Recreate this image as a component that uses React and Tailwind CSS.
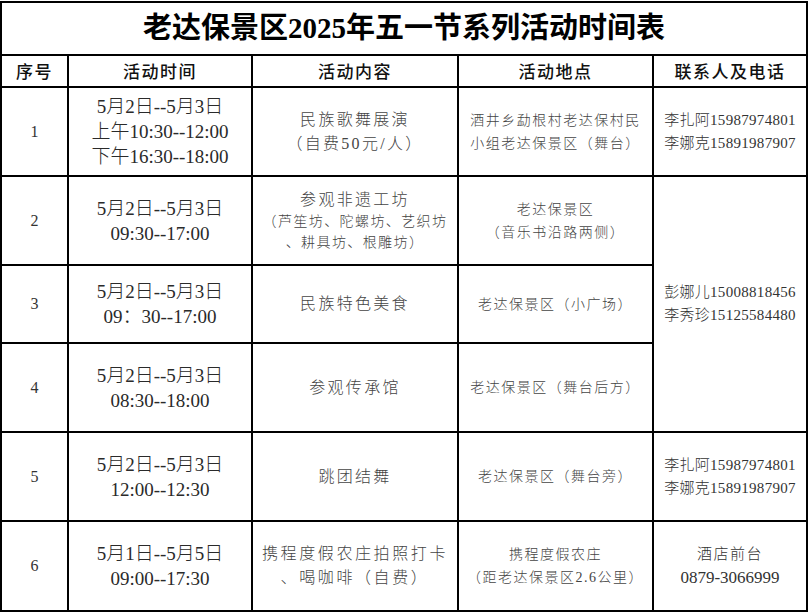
import React from "react";

const serif = "font-['Liberation_Serif','Noto_Sans_CJK_SC',serif]";

function Cell({ children, className = "" }) {
  return (
    <div
      className={`bg-white flex flex-col items-center justify-center text-center whitespace-nowrap ${className}`}
    >
      {children}
    </div>
  );
}

function Num({ n }) {
  return <Cell className={`${serif} text-[16px] text-[#333]`}>{n}</Cell>;
}

function Time({ lines }) {
  return (
    <Cell className={`${serif} text-[19px] leading-[25px] text-[#2a2a2a] font-light`}>
      {lines.map((l, i) => (
        <div key={i}>{l}</div>
      ))}
    </Cell>
  );
}

function Content({ children }) {
  return (
    <Cell className={`${serif} text-[16px] leading-[24px] tracking-[2.3px] text-[#444] font-light`}>
      {children}
    </Cell>
  );
}

function Place({ lines }) {
  return (
    <Cell className={`${serif} text-[14px] leading-[23px] tracking-[1.5px] text-[#444] font-light`}>
      {lines.map((l, i) => (
        <div key={i}>{l}</div>
      ))}
    </Cell>
  );
}

function Contact({ lines, className = "" }) {
  return (
    <Cell className={`${serif} text-[15px] leading-[23px] tracking-[0.3px] text-[#333] font-light ${className}`}>
      {lines.map((l, i) => (
        <div key={i}>{l}</div>
      ))}
    </Cell>
  );
}

export default function App() {
  const head = "font-['Noto_Sans_CJK_SC',sans-serif] text-[17px] tracking-[1.5px] font-medium text-[#111]";
  return (
    <div className="w-[809px] h-[613px] bg-white">
      <div className="mt-px w-[808px] grid grid-cols-[65px_182px_204px_193px_152px] grid-rows-[51px_30px_87px_87px_76px_87px_87px_88px] gap-[2px] p-[2px] bg-black">
        <Cell className={`col-span-5 ${serif} text-[29px] font-bold text-black`}>
          老达保景区2025年五一节系列活动时间表
        </Cell>

        <Cell className={head}>序号</Cell>
        <Cell className={head}>活动时间</Cell>
        <Cell className={head}>活动内容</Cell>
        <Cell className={head}>活动地点</Cell>
        <Cell className={head}>联系人及电话</Cell>

        {/* Row 1 */}
        <Num n="1" />
        <Time lines={["5月2日--5月3日", "上午10:30--12:00", "下午16:30--18:00"]} />
        <Content>
          <div>民族歌舞展演</div>
          <div>（自费50元/人）</div>
        </Content>
        <Place lines={["酒井乡勐根村老达保村民", "小组老达保景区（舞台）"]} />
        <Contact lines={["李扎阿15987974801", "李娜克15891987907"]} />

        {/* Row 2 */}
        <Num n="2" />
        <Time lines={["5月2日--5月3日", "09:30--17:00"]} />
        <Content>
          <div className="leading-[23px]">参观非遗工坊</div>
          <div className="text-[14px] leading-[21px] tracking-[1.4px]">（芦笙坊、陀螺坊、艺织坊</div>
          <div className="text-[14px] leading-[21px] tracking-[1.4px]">、耕具坊、根雕坊）</div>
        </Content>
        <Place lines={["老达保景区", "（音乐书沿路两侧）"]} />
        <Contact
          className="row-span-3"
          lines={["彭娜儿15008818456", "李秀珍15125584480"]}
        />

        {/* Row 3 */}
        <Num n="3" />
        <Time lines={["5月2日--5月3日", "09：30--17:00"]} />
        <Content>
          <div>民族特色美食</div>
        </Content>
        <Place lines={["老达保景区（小广场）"]} />

        {/* Row 4 */}
        <Num n="4" />
        <Time lines={["5月2日--5月3日", "08:30--18:00"]} />
        <Content>
          <div>参观传承馆</div>
        </Content>
        <Place lines={["老达保景区（舞台后方）"]} />

        {/* Row 5 */}
        <Num n="5" />
        <Time lines={["5月2日--5月3日", "12:00--12:30"]} />
        <Content>
          <div>跳团结舞</div>
        </Content>
        <Place lines={["老达保景区（舞台旁）"]} />
        <Contact lines={["李扎阿15987974801", "李娜克15891987907"]} />

        {/* Row 6 */}
        <Num n="6" />
        <Time lines={["5月1日--5月5日", "09:00--17:30"]} />
        <Content>
          <div className="tracking-[2.6px]">携程度假农庄拍照打卡</div>
          <div className="tracking-[2.6px]">、喝咖啡（自费）</div>
        </Content>
        <Place lines={["携程度假农庄", "（距老达保景区2.6公里）"]} />
        <Contact
          lines={[
            <span key="a" className="tracking-[1.5px]">酒店前台</span>,
            <span key="b" className="text-[17px] tracking-normal">0879-3066999</span>,
          ]}
        />
      </div>
    </div>
  );
}
